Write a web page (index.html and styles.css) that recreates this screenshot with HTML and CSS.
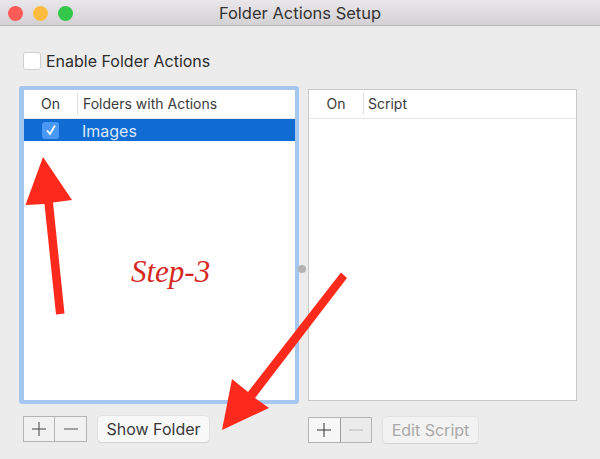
FILE: index.html
```html
<!DOCTYPE html>
<html>
<head>
<title>Folder Actions Setup</title>
<link rel="stylesheet" href="styles.css">
</head>
<body>

<div class="window">
	<header class="titlebar">
		<div class="lights">
			<span class="light red"></span>
			<span class="light yellow"></span>
			<span class="light green"></span>
		</div>
		<span class="title">Folder Actions Setup</span>
	</header>

	<div class="content">
		<label class="enable">
			<span class="checkbox"></span>
			<span>Enable Folder Actions</span>
		</label>

		<div class="columns">
			<section class="column left">
				<div class="list focused">
					<div class="list-head">
						<span class="col-on">On</span>
						<span class="col-name">Folders with Actions</span>
					</div>
					<div class="list-row selected">
						<span class="col-on"><span class="tick">
							<svg width="12" height="12" viewBox="0 0 12 12"><path d="M2 6.5 L5 10 L10 1.5" fill="none" stroke="#fff" stroke-width="1.8"/></svg>
						</span></span>
						<span class="col-name">Images</span>
					</div>
				</div>
				<div class="tools">
					<div class="segment">
						<button class="seg-btn">
							<svg width="16" height="16" viewBox="0 0 16 16"><path d="M8 1 V15 M1 8 H15" stroke="#444" stroke-width="1" fill="none"/></svg>
						</button>
						<button class="seg-btn">
							<svg width="16" height="16" viewBox="0 0 16 16"><path d="M1 8 H15" stroke="#555" stroke-width="1" fill="none"/></svg>
						</button>
					</div>
					<button class="push">Show Folder</button>
				</div>
			</section>

			<section class="column right">
				<div class="list plain">
					<div class="list-head">
						<span class="col-on">On</span>
						<span class="col-name">Script</span>
					</div>
				</div>
				<div class="tools">
					<div class="segment">
						<button class="seg-btn active">
							<svg width="16" height="16" viewBox="0 0 16 16"><path d="M8 1 V15 M1 8 H15" stroke="#333" stroke-width="1" fill="none"/></svg>
						</button>
						<button class="seg-btn disabled">
							<svg width="16" height="16" viewBox="0 0 16 16"><path d="M1 8 H15" stroke="#bbb" stroke-width="1" fill="none"/></svg>
						</button>
					</div>
					<button class="push disabled">Edit Script</button>
				</div>
			</section>
		</div>
	</div>

	<span class="split-handle"></span>
	<span class="step">Step-3</span>

	<svg class="arrows" width="600" height="459" viewBox="0 0 600 459">
		<polygon fill="#fc2a1c" points="43,157 72,200 53,202.5 64.5,313.5 56,314.5 44.5,204 25.5,205"/>
		<polygon fill="#fc2a1c" points="341,272.5 347,278 255,398 269,408 222,430 232,379 248,392"/>
	</svg>
</div>

</body>
</html>
```

FILE: styles.css
```css
body {
	margin: 0;
	font-family: 'Inter', 'Liberation Sans', Arial, sans-serif;
	color: #2c2c2c;
	background-color: #ececec;
}

button {
	font-family: inherit;
}

.window {
	position: relative;
	width: 600px;
	height: 459px;
	overflow: hidden;
}

/* title bar */
.titlebar {
	display: flex;
	align-items: center;
	justify-content: center;
	position: relative;
	height: 26px;
	box-sizing: border-box;
	border-bottom: 1px solid #b9b7b8;
	background-image: linear-gradient(to bottom, #e9e7e9, #d3d1d3);
}

.title {
	font-size: 16.5px;
	color: #333;
}

.lights {
	position: absolute;
	left: 8px;
	top: 6px;
	display: flex;
	gap: 10px;
}

.light {
	width: 15px;
	height: 15px;
	border-radius: 50%;
}

.light.red { background-color: #fc5b57; }
.light.yellow { background-color: #fdbc40; }
.light.green { background-color: #34c84a; }

/* main area */
.content {
	display: flex;
	flex-direction: column;
	padding: 26px 0 0 19px;
}

.enable {
	display: flex;
	align-items: center;
	gap: 5px;
	height: 18px;
	margin-left: 4px;
	font-size: 16px;
}

.checkbox {
	width: 16px;
	height: 16px;
	border: 1px solid #cfcfcf;
	border-radius: 3px;
	background-color: #fff;
}

.columns {
	display: flex;
	gap: 9px;
	margin-top: 16px;
}

.column {
	display: flex;
	flex-direction: column;
}

.column.left { width: 280px; }
.column.right { width: 269px; padding-top: 3px; }

.list {
	box-sizing: border-box;
	background-color: #fff;
}

.list.focused {
	height: 318px;
	border: 4px solid #a5c7ee;
	border-left-width: 5px;
	border-radius: 3px;
}

.list.plain {
	height: 312px;
	border: 1px solid #c9c9c9;
}

.list-head, .list-row {
	display: flex;
	align-items: center;
	font-size: 14px;
}

.list-head {
	height: 29px;
	box-sizing: border-box;
	padding-bottom: 2px;
	border-bottom: 1px solid #e6e6e6;
	color: #3a3a3a;
}

.list-row {
	height: 22px;
}

.list-row.selected {
	background-color: #106cd3;
	color: #d8e8fb;
	font-size: 16px;
}

.col-on {
	display: flex;
	justify-content: center;
	width: 53px;
}

.list-head .col-name {
	border-left: 1px solid #e0e0e0;
	padding-left: 5px;
	line-height: 21px;
}

.list-row .col-name {
	padding: 2px 0 0 5px;
}

.plain .col-on {
	width: 54px;
	box-sizing: border-box;
}

.plain .list-head .col-name {
	padding-left: 4px;
}

.tick {
	display: flex;
	align-items: center;
	justify-content: center;
	width: 17px;
	height: 17px;
	border-radius: 3px;
	background-color: #4a98f5;
}

/* bottom buttons */
.tools {
	display: flex;
	gap: 11px;
	margin-top: 12px;
	padding-left: 4px;
}

.column.right .tools {
	margin-top: 16px;
	padding-left: 0;
}

.segment {
	display: flex;
	box-sizing: border-box;
	width: 64px;
	height: 26px;
	border: 1px solid #b4b4b4;
	background-color: #f1f1f1;
}

.seg-btn {
	display: flex;
	flex: 1;
	align-items: center;
	justify-content: center;
	padding: 0;
	border: none;
	background: none;
}

.column.left .seg-btn:first-child {
	flex: none;
	width: 30px;
}

.seg-btn + .seg-btn {
	border-left: 1px solid #b4b4b4;
}

.seg-btn.disabled {
	border-left-color: #9a9a9a;
	background-color: #ebebeb;
}

.seg-btn.active {
	background-color: #f7f7f7;
}

.push {
	box-sizing: border-box;
	height: 26px;
	width: 111px;
	padding: 0 0 1px;
	border: none;
	border-radius: 4px;
	background-color: #f8f8f8;
	box-shadow: 0 0 0 0.5px #d9d9d9, 0 1px 1px #cfcfcf;
	color: #3a3a3a;
	font-size: 16px;
}

.push.disabled {
	width: 95px;
	background-color: #f2f2f2;
	color: #a9a9a9;
}

/* things lying over the window */
.split-handle {
	position: absolute;
	left: 298px;
	top: 265px;
	width: 8px;
	height: 8px;
	border-radius: 50%;
	background-color: #b3b3b3;
}

.step {
	position: absolute;
	left: 131px;
	top: 254px;
	font-family: 'Liberation Serif', serif;
	font-style: italic;
	font-size: 31px;
	color: #d5281f;
}

.arrows {
	position: absolute;
	left: 0;
	top: 0;
}
```
